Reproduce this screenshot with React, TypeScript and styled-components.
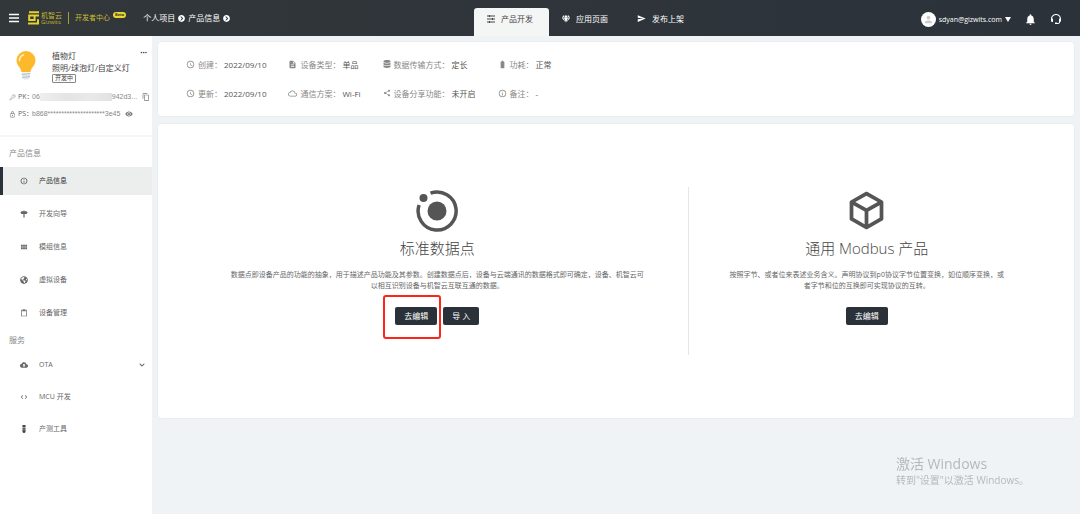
import React from 'react';
import styled, { createGlobalStyle } from 'styled-components';
import { IoKeyOutline } from 'react-icons/io5';
import { FaChevronCircleRight, FaGem, FaGlobeAmericas, FaChevronDown, FaDatabase } from 'react-icons/fa';
import {
  MdSend, MdNotifications, MdInfoOutline, MdViewModule, MdCloudUpload, MdCode, MdAccessTime,
  MdDescription, MdBatteryFull, MdShare, MdCloudQueue, MdContentCopy, MdRemoveRedEye, MdContentPaste,
  MdPerson, MdOutlineLock,
} from 'react-icons/md';
import { BiSupport } from 'react-icons/bi';

const Global = createGlobalStyle`
  * { box-sizing: border-box; }
  body {
    margin: 0;
    background: #eff3f6;
    color: #555;
    font: 8px/12px "Open Sans", "Noto Sans CJK SC", sans-serif;
  }
  svg { display: block; flex: none; }
  a { color: inherit; text-decoration: none; }
  button { font-family: inherit; cursor: pointer; }
  ul, dl, dd, p, h1, h2, h3 { margin: 0; padding: 0; list-style: none; font-weight: 400; }
`;

const Page = styled.div`
  min-height: 100vh;
  display: flex;
  flex-direction: column;
`;

const Header = styled.header`
  height: 36px;
  display: flex;
  background: linear-gradient(90deg, #32373a, #2b323a);
  color: #fff;
`;

const HeaderLeft = styled.div`
  flex: 0 1 474px;
  display: flex;
  align-items: center;
  padding-left: 9px;
  white-space: nowrap;
`;

const IconButton = styled.button`
  display: flex;
  padding: 0;
  border: 0;
  background: none;
  color: inherit;
`;

const Brand = styled.a`
  display: flex;
  align-items: center;
  gap: 2px;
  margin-left: 9px;
  color: #e3d22f;
`;

const BrandName = styled.span`
  display: flex;
  flex-direction: column;
  color: #c4b632;
  font-size: 7px;
  line-height: 7px;
`;

const BrandLatin = styled.span`
  font-size: 6px;
  line-height: 6px;
`;

const Center = styled.span`
  display: flex;
  align-items: center;
  margin-left: 6px;
  padding-left: 6px;
  border-left: 1px solid #a99d33;
  color: #cbbd33;
  font-size: 7px;
`;

const Beta = styled.span`
  align-self: flex-start;
  margin-left: 3px;
  padding: 0 2px;
  border-radius: 4px;
  background: #e9d82e;
  color: #32373a;
  font-size: 4px;
  line-height: 6px;
  font-weight: 700;
`;

const Crumbs = styled.nav`
  display: flex;
  align-items: center;
  gap: 3px;
  margin-left: 17px;
`;

const Tabs = styled.nav`
  display: flex;
  align-items: flex-end;
`;

const Tab = styled.a<{ $active?: boolean }>`
  width: 75px;
  height: 28px;
  padding: 0 13px 7px;
  display: flex;
  align-items: center;
  gap: 6px;
  border-radius: 3px 3px 0 0;
  white-space: nowrap;
  background: ${p => (p.$active ? '#f4f5f5' : 'transparent')};
  color: ${p => (p.$active ? '#444' : '#fff')};
`;

const HeaderRight = styled.div`
  margin-left: auto;
  padding: 2px 18px 0 0;
  display: flex;
  align-items: center;
  gap: 13px;
`;

const Account = styled.button`
  display: flex;
  align-items: center;
  gap: 3px;
  padding: 0;
  border: 0;
  background: none;
  color: #fff;
  font-size: 7px;
`;

const Avatar = styled.span`
  width: 15px;
  height: 15px;
  border-radius: 50%;
  display: flex;
  align-items: center;
  justify-content: center;
  background: #fff;
  color: #ccc;
`;

const Caret = styled.span`
  border: 3px solid transparent;
  border-top: 5px solid #fff;
  border-bottom: 0;
`;

const Body = styled.div`
  flex: 1;
  display: flex;
`;

const Sidebar = styled.aside`
  flex: 0 0 152px;
  min-width: 0;
  background: #fff;
`;

const Profile = styled.section`
  height: 101px;
  padding-top: 14px;
  border-bottom: 2px solid #f5f6f7;
`;

const ProfileTop = styled.div`
  display: flex;
  gap: 16px;
  padding: 0 5px 0 16px;
`;

const ProfileText = styled.div`
  flex: 1;
  min-width: 0;
  display: flex;
  flex-direction: column;
  align-items: flex-start;
  color: #444;
  white-space: nowrap;
`;

const ProductName = styled.h1`
  && {
    font-size: 8px;
    line-height: 12px;
  }
`;

const Status = styled.span`
  padding: 0 2px;
  border: 1px solid #888;
  border-radius: 1px;
  font-size: 6px;
  line-height: 7px;
`;

const More = styled.button`
  align-self: flex-start;
  padding: 0;
  border: 0;
  background: none;
  color: #333;
  font-size: 8px;
  line-height: 6px;
  font-weight: 700;
`;

const Keys = styled.dl`
  display: grid;
  gap: 5px;
  margin-top: 8px;
  padding-left: 9px;
  color: #888;
  font-size: 7px;
`;

const KeyRow = styled.div`
  display: flex;
  align-items: center;
  gap: 2px;
  white-space: nowrap;
`;

const KeyName = styled.dt`
  width: 12px;
  color: #666;
`;

const KeyValue = styled.dd`
  display: flex;
  align-items: center;
  font-family: "Liberation Sans", sans-serif;
`;

const Redacted = styled.span`
  width: 72px;
  height: 8px;
  background: linear-gradient(90deg, #eee, #e4e4e4 40%, #e9e9e9 70%, #e2e2e2);
`;

const KeyAction = styled(IconButton)`
  margin-left: 3px;
  color: #777;
`;

const GroupTitle = styled.h3`
  padding: 10px 9px 8px;
  color: #888;
  font-size: 8px;
`;

const Menu = styled.ul<{ $gap: number }>`
  display: flex;
  flex-direction: column;
  gap: ${p => p.$gap}px;
`;

const MenuLink = styled.a<{ $active?: boolean }>`
  height: 28px;
  display: flex;
  align-items: center;
  gap: 11px;
  padding: 0 7px 0 17px;
  border-left: 3px solid ${p => (p.$active ? '#2b3138' : 'transparent')};
  background: ${p => (p.$active ? '#eceeee' : 'transparent')};
  color: ${p => (p.$active ? '#333' : '#666')};
  font-size: 7px;
`;

const MenuLabel = styled.span`
  flex: 1;
`;

const Services = styled.section`
  h3 { padding: 7px 9px 5px; }
`;

const Main = styled.main`
  flex: 1;
  min-width: 0;
  padding: 6px;
  display: flex;
  flex-direction: column;
  gap: 8px;
`;

const Card = styled.section`
  background: #fff;
  border-radius: 4px;
  box-shadow: 0 0 1px 1px #e9edf0;
`;

const Facts = styled.dl`
  display: grid;
  grid-template-columns: repeat(4, max-content);
  gap: 17px 22px;
  padding: 17px 28px 16px;
`;

const Fact = styled.div`
  display: flex;
  align-items: center;
  gap: 3px;
  color: #888;
  svg { margin-top: -2px; }
`;

const FactValue = styled.dd`
  margin-left: -1px;
  color: #555;
`;

const Choices = styled.div`
  display: grid;
  grid-template-columns: 7fr 5fr;
  padding: 63px 29px;
`;

const Choice = styled.section<{ $pad: number }>`
  min-height: 168px;
  padding: 0 ${p => p.$pad}px;
  display: flex;
  flex-direction: column;
  align-items: center;
  color: #555;
  text-align: center;
  & + & { border-left: 1px solid #e6e6e6; }
`;

const ChoiceIcon = styled.div`
  height: 47px;
  display: flex;
  align-items: center;
`;

const ChoiceTitle = styled.h2`
  && { font-weight: 300; }
  margin-top: 3px;
  font-size: 15px;
  line-height: 22px;
  color: #444;
`;

const ChoiceText = styled.p`
  margin-top: 10px;
  font-size: 7px;
  line-height: 11px;
  color: #666;
`;

const Actions = styled.div`
  display: flex;
  gap: 6px;
  margin-top: 16px;
`;

const Action = styled.button`
  height: 18px;
  padding: 0 9px;
  border: 0;
  border-radius: 2px;
  background: #2a3138;
  color: #fff;
  font-size: 8px;
  line-height: 18px;
`;

const Marked = styled.span`
  position: relative;
  display: flex;
  &::after {
    content: '';
    position: absolute;
    inset: -12px -4px -14px -12px;
    border: 2px solid #fb2619;
    border-radius: 3px;
    pointer-events: none;
  }
`;

const Watermark = styled.aside`
  position: fixed;
  right: 51px;
  bottom: 27px;
  color: #b6b9bb;
  font-size: 10px;
  line-height: 14px;
  pointer-events: none;
`;

const WatermarkTitle = styled.p`
  font-size: 14px;
  line-height: 18px;
`;

const MenuIcon = () => (
  <svg width="10" height="10" viewBox="0 0 10 10" stroke="currentColor" strokeWidth="1.300">
    <path d="M0 1.500H10M0 5H10M0 8.500H10" />
  </svg>
);

const Logo = () => (
  <svg width="11" height="14" viewBox="0 0 11 14" fill="none" stroke="currentColor" strokeWidth="2">
    <path d="M1 1.2H11M11 4.6H1.2V9H6.6V5M0 12.6H10V8.2" />
  </svg>
);

const TuneIcon = () => (
  <svg width="8" height="8" viewBox="0 0 8 8" fill="none" stroke="currentColor">
    <path d="M0 1H8M0 4H8M0 7H8M2.5 0V2M5.5 3V5M2.5 6V8" />
  </svg>
);

const Bulb = () => (
  <svg width="20" height="31" viewBox="0 0 20 31">
    <path d="M10 1a9.5 9.5 0 0 0-9.5 9.4c0 5.300 4.500 6.600 5 11.600h9c.5-5 5-6.300 5-11.600A9.500 9.500 0 0 0 10 1z" fill="#fdb92b" />
    <path d="M3.500 10.500c.2-3 1.700-5 4-5.500" stroke="#fff3cf" strokeWidth="1.500" fill="none" strokeLinecap="round" />
    <path d="M6 22.500h8v5l-2 2H8l-2-2z" fill="#dfe7ea" />
    <path d="M5.500 24.500l9-1M6 27.500l8-1" stroke="#b7c6cc" />
  </svg>
);

const SignIcon = () => (
  <svg width="8" height="8" viewBox="0 0 8 8" fill="currentColor">
    <path d="M3.500 .5h1V1.200H6.500L7.700 2.600 6.500 4H4.600V7.500H3.400V4H1.300L.5 2.600l.8-1.400h2.200z" />
  </svg>
);

const StickIcon = () => (
  <svg width="8" height="8" viewBox="0 0 8 8" fill="#444">
    <path d="M2.500 0h3v2h-3zM2.500 2.500h3V7l-1 1h-1l-1-1z" />
    <path d="M3.500 3.500h1v2h-1z" fill="#aaa" />
  </svg>
);

const Orbit = () => (
  <svg width="42" height="42" viewBox="0 0 42 42">
    <path d="M14.500 3.200A19 19 0 1 1 3.100 15" fill="none" stroke="currentColor" strokeWidth="3.500" />
    <circle cx="21" cy="21" r="9.500" fill="currentColor" />
    <circle cx="7.500" cy="8" r="4" fill="currentColor" />
  </svg>
);

const Cube = () => (
  <svg width="45" height="45" viewBox="0 0 24 24" fill="currentColor">
    <path d="M21 16.500c0 .38-.21.71-.53.88l-7.900 4.440c-.16.12-.36.18-.57.18s-.41-.06-.57-.18l-7.900-4.440A.99.99 0 0 1 3 16.500v-9c0-.38.21-.71.53-.88l7.900-4.440c.16-.12.36-.18.57-.18s.41.06.57.18l7.900 4.440c.32.17.53.5.53.88v9M12 4.150 6.040 7.500 12 10.850l5.960-3.350L12 4.150M5 15.910l6 3.380v-6.710L5 9.210v6.700m14 0v-6.700l-6 3.370v6.710l6-3.380z" />
  </svg>
);

const infoItems = [
  { icon: <MdInfoOutline size={8} />, label: '产品信息', active: true },
  { icon: <SignIcon />, label: '开发向导' },
  { icon: <MdViewModule size={8} />, label: '模组信息' },
  { icon: <FaGlobeAmericas size={8} />, label: '虚拟设备' },
  { icon: <MdContentPaste size={8} />, label: '设备管理' },
];

const serviceItems = [
  { icon: <MdCloudUpload size={8} />, label: 'OTA', open: true },
  { icon: <MdCode size={8} />, label: 'MCU 开发' },
  { icon: <StickIcon />, label: '产测工具' },
];

const facts = [
  { icon: <MdAccessTime size={9} />, name: '创建', value: '2022/09/10' },
  { icon: <MdDescription size={9} />, name: '设备类型', value: '单品' },
  { icon: <FaDatabase size={8} />, name: '数据传输方式', value: '定长' },
  { icon: <MdBatteryFull size={9} />, name: '功耗', value: '正常' },
  { icon: <MdAccessTime size={9} />, name: '更新', value: '2022/09/10' },
  { icon: <MdCloudQueue size={9} />, name: '通信方案', value: 'Wi-Fi' },
  { icon: <MdShare size={8} />, name: '设备分享功能', value: '未开启' },
  { icon: <MdInfoOutline size={9} />, name: '备注', value: '-' },
];

export default function App() {
  return (
    <Page lang="zh-CN">
      <Global />
      <Header>
        <HeaderLeft>
          <IconButton aria-label="菜单"><MenuIcon /></IconButton>
          <Brand href="#">
            <Logo />
            <BrandName>机智云<BrandLatin>Gizwits</BrandLatin></BrandName>
          </Brand>
          <Center>开发者中心<Beta>Beta</Beta></Center>
          <Crumbs>
            <a href="#">个人项目</a>
            <FaChevronCircleRight size={7} />
            <a href="#">产品信息</a>
            <FaChevronCircleRight size={7} />
          </Crumbs>
        </HeaderLeft>
        <Tabs>
          <Tab href="#" $active><TuneIcon />产品开发</Tab>
          <Tab href="#"><FaGem size={8} />应用页面</Tab>
          <Tab href="#"><MdSend size={9} />发布上架</Tab>
        </Tabs>
        <HeaderRight>
          <Account>
            <Avatar><MdPerson size={11} /></Avatar>
            sdyan@gizwits.com
            <Caret />
          </Account>
          <IconButton aria-label="通知"><MdNotifications size={13} /></IconButton>
          <IconButton aria-label="客服"><BiSupport size={12} /></IconButton>
        </HeaderRight>
      </Header>
      <Body>
        <Sidebar>
          <Profile>
            <ProfileTop>
              <Bulb />
              <ProfileText>
                <ProductName>植物灯</ProductName>
                <span>照明/球泡灯/自定义灯</span>
                <Status>开发中</Status>
              </ProfileText>
              <More aria-label="更多">···</More>
            </ProfileTop>
            <Keys>
              <KeyRow>
                <IoKeyOutline size={7} />
                <KeyName>PK：</KeyName>
                <KeyValue>06<Redacted />942d3...</KeyValue>
                <KeyAction aria-label="复制"><MdContentCopy size={8} /></KeyAction>
              </KeyRow>
              <KeyRow>
                <MdOutlineLock size={7} />
                <KeyName>PS：</KeyName>
                <KeyValue>b868*********************3e45</KeyValue>
                <KeyAction aria-label="显示"><MdRemoveRedEye size={8} /></KeyAction>
              </KeyRow>
            </Keys>
          </Profile>
          <section>
            <GroupTitle>产品信息</GroupTitle>
            <Menu $gap={5}>
              {infoItems.map(item => (
                <li key={item.label}>
                  <MenuLink href="#" $active={item.active}>{item.icon}<MenuLabel>{item.label}</MenuLabel></MenuLink>
                </li>
              ))}
            </Menu>
          </section>
          <Services>
            <GroupTitle>服务</GroupTitle>
            <Menu $gap={4}>
              {serviceItems.map(item => (
                <li key={item.label}>
                  <MenuLink href="#">
                    {item.icon}<MenuLabel>{item.label}</MenuLabel>
                    {item.open && <FaChevronDown size={6} />}
                  </MenuLink>
                </li>
              ))}
            </Menu>
          </Services>
        </Sidebar>
        <Main>
          <Card>
            <Facts>
              {facts.map(f => (
                <Fact key={f.name}>
                  {f.icon}
                  <dt>{f.name}：</dt>
                  <FactValue>{f.value}</FactValue>
                </Fact>
              ))}
            </Facts>
          </Card>
          <Card>
            <Choices>
              <Choice $pad={42}>
                <ChoiceIcon><Orbit /></ChoiceIcon>
                <ChoiceTitle>标准数据点</ChoiceTitle>
                <ChoiceText>
                  数据点即设备产品的功能的抽象，用于描述产品功能及其参数。创建数据点后，设备与云端通讯的数据格式即可确定，设备、机智云可以相互识别设备与机智云互联互通的数据。
                </ChoiceText>
                <Actions>
                  <Marked><Action>去编辑</Action></Marked>
                  <Action>导 入</Action>
                </Actions>
              </Choice>
              <Choice $pad={40}>
                <ChoiceIcon><Cube /></ChoiceIcon>
                <ChoiceTitle>通用 Modbus 产品</ChoiceTitle>
                <ChoiceText>
                  按照字节、或者位来表述业务含义。声明协议到p0协议字节位置变换，如位顺序变换，或者字节和位的互换即可实现协议的互转。
                </ChoiceText>
                <Actions><Action>去编辑</Action></Actions>
              </Choice>
            </Choices>
          </Card>
        </Main>
      </Body>
      <Watermark>
        <WatermarkTitle>激活 Windows</WatermarkTitle>
        转到"设置"以激活 Windows。
      </Watermark>
    </Page>
  );
}
